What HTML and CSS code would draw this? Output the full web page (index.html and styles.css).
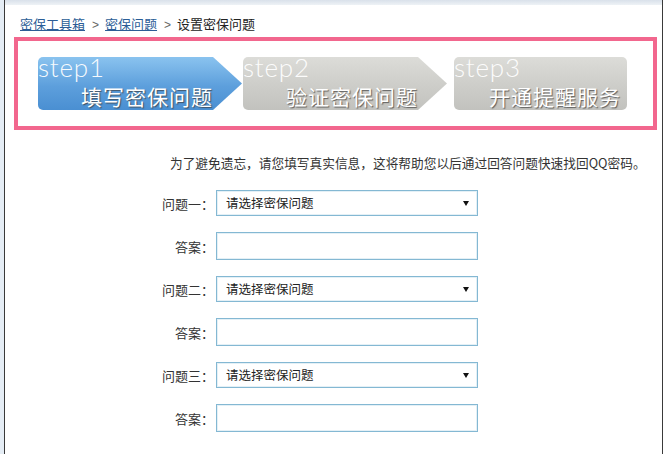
FILE: index.html
```html
<!DOCTYPE html>
<html lang="zh-CN">
<head>
<meta charset="utf-8">
<title>设置密保问题</title>
<link rel="stylesheet" href="styles.css">
</head>
<body>
<div class="page">
  <div class="gutter"></div>
  <div class="panel">
    <div class="topband"></div>
    <div class="crumbs">
      <a class="crumb-link" href="#">密保工具箱</a><span class="sep">&gt;</span><a class="crumb-link" href="#">密保问题</a><span class="sep">&gt;</span><span class="crumb-current">设置密保问题</span>
    </div>
    <div class="steps-row">
      <div class="steps-box">
        <div class="step step-arrow step-active">
          <div class="shape"></div>
          <div class="step-body">
            <div class="step-num">step1</div>
            <div class="step-name">填写密保问题</div>
          </div>
        </div>
        <div class="step step-arrow step-idle step-second">
          <div class="shape"></div>
          <div class="step-body">
            <div class="step-num">step2</div>
            <div class="step-name">验证密保问题</div>
          </div>
        </div>
        <div class="step step-idle step-last">
          <div class="shape"></div>
          <div class="step-body">
            <div class="step-num">step3</div>
            <div class="step-name">开通提醒服务</div>
          </div>
        </div>
      </div>
      <div class="dots"></div>
    </div>
    <p class="intro">为了避免遗忘，请您填写真实信息，这将帮助您以后通过回答问题快速找回QQ密码。</p>
    <div class="form">
      <div class="row row-select">
        <label class="label">问题一：</label>
        <div class="select"><span class="select-text">请选择密保问题</span><svg class="caret" width="6" height="5" viewBox="0 0 6 5"><path d="M0 0H6L3 5Z" fill="#111"/></svg></div>
      </div>
      <div class="row row-input">
        <label class="label">答案：</label>
        <input class="input" type="text">
      </div>
      <div class="row row-select">
        <label class="label">问题二：</label>
        <div class="select"><span class="select-text">请选择密保问题</span><svg class="caret" width="6" height="5" viewBox="0 0 6 5"><path d="M0 0H6L3 5Z" fill="#111"/></svg></div>
      </div>
      <div class="row row-input">
        <label class="label">答案：</label>
        <input class="input" type="text">
      </div>
      <div class="row row-select">
        <label class="label">问题三：</label>
        <div class="select"><span class="select-text">请选择密保问题</span><svg class="caret" width="6" height="5" viewBox="0 0 6 5"><path d="M0 0H6L3 5Z" fill="#111"/></svg></div>
      </div>
      <div class="row row-input">
        <label class="label">答案：</label>
        <input class="input" type="text">
      </div>
    </div>
  </div>
</div>
</body>
</html>
```
FILE: styles.css
```css
html, body {
  margin: 0;
  padding: 0;
  background: #ffffff;
}
body {
  font-family: "Noto Sans CJK SC", "Liberation Sans", sans-serif;
  font-size: 13px;
  color: #333333;
}
.page {
  width: 664px;
  height: 454px;
  overflow: hidden;
  display: flex;
}
.gutter {
  width: 4px;
  flex: none;
  background: #e5edf5;
}
.panel {
  width: 657px;
  flex: none;
  border-left: 1px solid #3a3a3a;
  border-right: 1px solid #3a3a3a;
  background: #ffffff;
}
.topband {
  height: 5px;
  background: linear-gradient(#d9e1ea, #eef2f6);
}
.crumbs {
  padding: 9px 0 0 15px;
  height: 20px;
  line-height: 20px;
  font-size: 13px;
  color: #333;
}
.crumb-link {
  color: #2b5d96;
  text-decoration: underline;
}
.sep {
  color: #666;
  margin: 0 6px 0 7px;
  font-family: "Liberation Sans", sans-serif;
  font-size: 12px;
}
.crumb-current {
  color: #222;
}
.steps-row {
  display: flex;
  margin-top: 3px;
}
.steps-box {
  margin-left: 9px;
  width: 621px;
  border: 4px solid #f2678e;
  padding: 16px 0 16px 20px;
  display: flex;
  box-sizing: content-box;
}
.dots {
  flex: 1;
  margin: 1px 2px 0 3px;
  border-top: 1px dotted #b8b8b8;
  height: 0;
}
.step {
  height: 53px;
  display: grid;
  isolation: isolate;
}
.shape {
  grid-area: 1 / 1;
  border-radius: 5px;
}
.step-body {
  grid-area: 1 / 1;
  display: flex;
  flex-direction: column;
  position: relative;
  z-index: 1;
}
.step-arrow {
  width: 204px;
}
.step-arrow .shape {
  clip-path: polygon(0 0, 175px 0, 100% 50%, 175px 100%, 0 100%);
}
.step-second {
  margin-left: 1px;
}
.step-last {
  width: 173px;
  margin-left: 7px;
}
.step-active .shape {
  background: linear-gradient(#8ac3ef, #5d9fdc 55%, #4a8fd2);
}
.step-idle .shape {
  background: linear-gradient(#dcdcd8, #cdcdc9 55%, #c2c2be);
}
.step-num {
  font-family: Lato, "DejaVu Sans", sans-serif;
  font-weight: 300;
  font-size: 26px;
  line-height: 22px;
  height: 30px;
  margin-top: -1px;
  color: rgba(255, 255, 255, 0.95);
  letter-spacing: 0.8px;
}
.step-name {
  align-self: flex-end;
  padding-right: 29px;
  font-size: 21px;
  line-height: 21px;
  letter-spacing: 1px;
  color: #ffffff;
  text-shadow: 1px 1px 1px rgba(60, 60, 60, 0.75);
}
.step-last .step-name {
  padding-right: 6px;
}
.intro {
  margin: 23px 0 0 165px;
  font-size: 12.7px;
  line-height: 20px;
  color: #333;
}
.form {
  margin-top: 17px;
  display: flex;
  flex-direction: column;
  gap: 16px;
}
.row {
  display: flex;
  align-items: center;
}
.label {
  width: 69px;
  margin-left: 140px;
  margin-right: 2px;
  text-align: right;
  font-size: 13px;
  color: #333;
}
.select {
  width: 243px;
  height: 24px;
  border: 1px solid #84b8d3;
  box-shadow: inset 0 0 0 1px #e4f0f6;
  display: flex;
  align-items: center;
  justify-content: space-between;
  padding: 0 8px 0 9px;
  box-sizing: content-box;
  font-size: 12.5px;
  color: #222;
  background: #fff;
}
.select-text {
  line-height: 20px;
}
.caret {
  display: block;
}
.input {
  width: 260px;
  height: 26px;
  margin: 0;
  padding: 0;
  border: 1px solid #84b8d3;
  box-shadow: inset 0 0 0 1px #e4f0f6;
  outline: none;
  font-family: inherit;
  font-size: 13px;
  background: #fff;
}
```
